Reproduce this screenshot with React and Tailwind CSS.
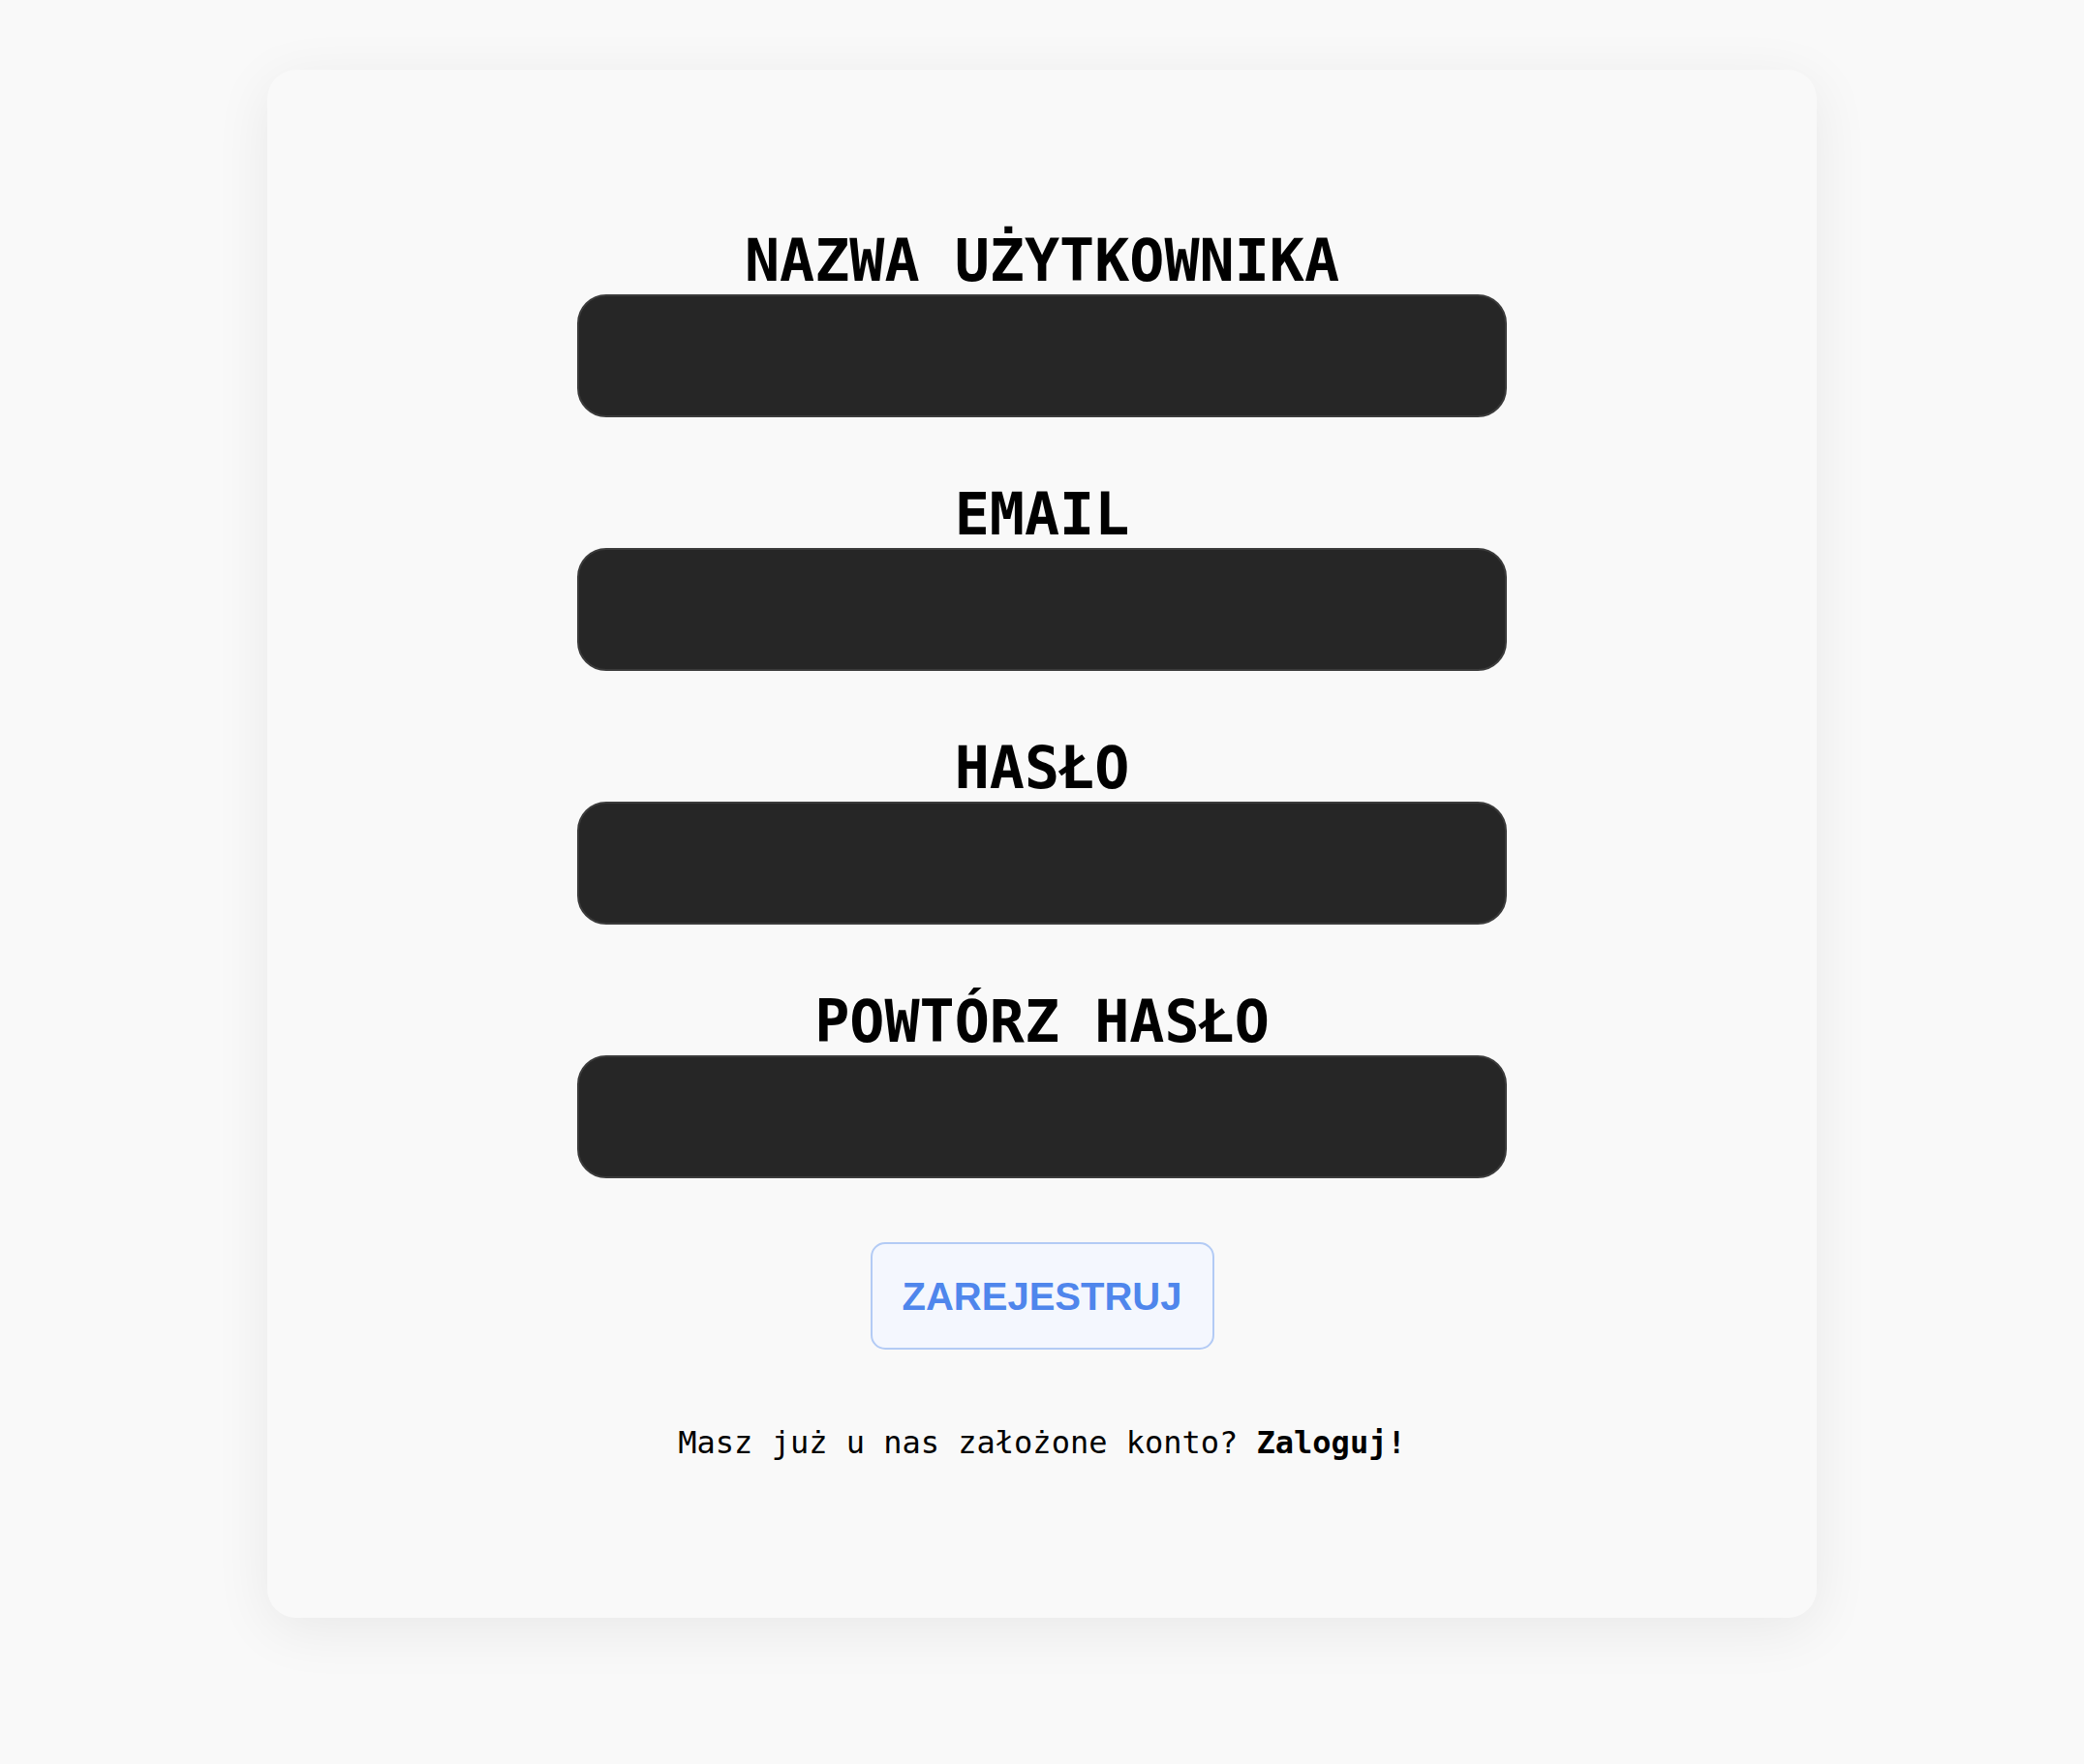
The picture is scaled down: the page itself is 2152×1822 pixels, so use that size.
import React from 'react';

const FIELDS = [
  { id: 'username', label: 'NAZWA UŻYTKOWNIKA', type: 'text' },
  { id: 'email', label: 'EMAIL', type: 'email' },
  { id: 'password', label: 'HASŁO', type: 'password' },
  { id: 'password2', label: 'POWTÓRZ HASŁO', type: 'password' },
];

const mono = "font-['DejaVu_Sans_Mono','Liberation_Mono',monospace]";

export default function App() {
  return (
    <div className="min-h-[1822px] w-full bg-[#f9f9f9] pt-[72px]">
      <div className="mx-auto flex h-[1599px] w-[1600px] flex-col items-center rounded-[30px] bg-[#f9f9f9] pt-[162px] shadow-[0_12px_60px_rgba(0,0,0,0.07)]">
        {FIELDS.map(field => (
          <div key={field.id} className="mb-[65px] flex w-[960px] flex-col items-center">
            <label
              htmlFor={field.id}
              className={`${mono} text-[60px] font-bold leading-[70px] text-black`}
            >
              {field.label}
            </label>
            <input
              id={field.id}
              type={field.type}
              className="h-[127px] w-full rounded-[30px] border-2 border-[#3b3b3b] bg-[#262626] px-8 text-[40px] text-white outline-none"
            />
          </div>
        ))}

        <button className="mt-[1px] h-[111px] w-[355px] rounded-[15px] border-2 border-[#b3cbf5] bg-[#f4f7fe] font-['Liberation_Sans',Arial,sans-serif] text-[40px] font-bold text-[#4f86ec]">
          ZAREJESTRUJ
        </button>

        <p className={`${mono} mt-[78px] text-[32px] leading-[37px] text-black`}>
          Masz już u nas założone konto? <span className="font-bold">Zaloguj!</span>
        </p>
      </div>
    </div>
  );
}
